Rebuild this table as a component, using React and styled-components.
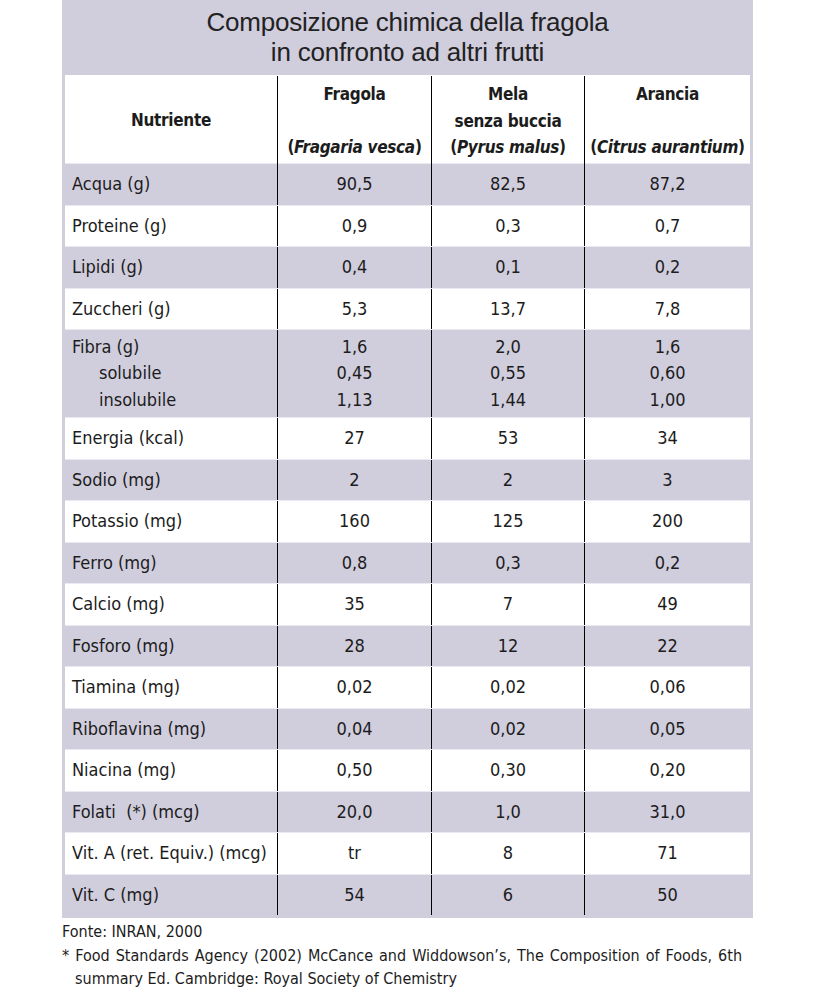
import React from 'react'
import styled, { createGlobalStyle } from 'styled-components'

const GlobalStyle = createGlobalStyle`
  body {
    margin: 0;
    background: #ffffff;
    font-family: "Liberation Sans Narrow", "DejaVu Sans Condensed", "Liberation Sans", Arial, sans-serif;
    color: #1c1c1c;
  }
`

const rows = [
  { name: 'Acqua (g)', v: ['90,5', '82,5', '87,2'] },
  { name: 'Proteine (g)', v: ['0,9', '0,3', '0,7'] },
  { name: 'Lipidi (g)', v: ['0,4', '0,1', '0,2'] },
  { name: 'Zuccheri (g)', v: ['5,3', '13,7', '7,8'] },
  {
    name: 'Fibra (g)',
    v: ['1,6', '2,0', '1,6'],
    sub: [
      { name: 'solubile', v: ['0,45', '0,55', '0,60'] },
      { name: 'insolubile', v: ['1,13', '1,44', '1,00'] },
    ],
  },
  { name: 'Energia (kcal)', v: ['27', '53', '34'] },
  { name: 'Sodio (mg)', v: ['2', '2', '3'] },
  { name: 'Potassio (mg)', v: ['160', '125', '200'] },
  { name: 'Ferro (mg)', v: ['0,8', '0,3', '0,2'] },
  { name: 'Calcio (mg)', v: ['35', '7', '49'] },
  { name: 'Fosforo (mg)', v: ['28', '12', '22'] },
  { name: 'Tiamina (mg)', v: ['0,02', '0,02', '0,06'] },
  { name: 'Riboflavina (mg)', v: ['0,04', '0,02', '0,05'] },
  { name: 'Niacina (mg)', v: ['0,50', '0,30', '0,20'] },
  { name: 'Folati\u00a0\u00a0(*) (mcg)', v: ['20,0', '1,0', '31,0'] },
  { name: 'Vit. A (ret. Equiv.) (mcg)', v: ['tr', '8', '71'] },
  { name: 'Vit. C (mg)', v: ['54', '6', '50'] },
]

const Page = styled.div`
  width: 691px;
  margin-left: 62px;
`

const Frame = styled.div`
  background: #d0cddd;
  padding: 0 3px 3px 3px;
`

const Title = styled.h1`
  margin: 0;
  padding: 7px 0 8px;
  font-family: "Liberation Sans", Arial, sans-serif;
  font-weight: 400;
  font-size: 26px;
  line-height: 30px;
  text-align: center;
  color: #222;
  letter-spacing: -0.2px;
`

const Row = styled.div`
  display: grid;
  grid-template-columns: 212px 154px 153px 166px;
  background: ${p => (p.$shaded ? '#d0cddd' : '#ffffff')};
  border-top: 1px solid ${p => (p.$first ? 'transparent' : '#ebe9f1')};
  height: ${p => p.$h}px;
`

const Cell = styled.div`
  display: flex;
  flex-direction: column;
  justify-content: center;
  align-items: ${p => (p.$left ? 'flex-start' : 'center')};
  padding-left: ${p => (p.$left ? '7px' : '0')};
  border-left: ${p => (p.$left ? 'none' : '1px solid #000')};
  font-size: 18px;
  line-height: 26.5px;
  white-space: nowrap;
`

const HeadCell = styled(Cell)`
  font-weight: 700;
  font-size: 17px;
  letter-spacing: -0.3px;
  justify-content: ${p => (p.$center ? 'center' : 'space-between')};
  align-items: center;
  padding: ${p => (p.$center ? '0' : '5px 0 3px')};
  text-align: center;
`

const Sub = styled.span`
  padding-left: ${p => (p.$indent ? '27px' : '0')};
`

const Notes = styled.div`
  padding-top: 2px;
  font-size: 16px;
  line-height: 23.5px;
  color: #1c1c1c;
`

const Note = styled.p`
  box-sizing: border-box;
  margin: 0;
  text-align: ${p => (p.$justify ? 'justify' : 'left')};
  padding-left: ${p => (p.$hang ? '13px' : '0')};
  text-indent: ${p => (p.$hang ? '-13px' : '0')};
  width: 680px;
`

export default function App() {
  return (
    <Page>
      <GlobalStyle />
      <Frame>
        <Title>
          Composizione chimica della fragola
          <br />
          in confronto ad altri frutti
        </Title>
        <Row $first $h={87}>
          <HeadCell $left $center>Nutriente</HeadCell>
          <HeadCell>
            <span>Fragola</span>
            <span>(<i>Fragaria vesca</i>)</span>
          </HeadCell>
          <HeadCell>
            <span>Mela</span>
            <span>senza buccia</span>
            <span>(<i>Pyrus malus</i>)</span>
          </HeadCell>
          <HeadCell>
            <span>Arancia</span>
            <span>(<i>Citrus aurantium</i>)</span>
          </HeadCell>
        </Row>
        {rows.map((r, i) => (
          <Row key={r.name} $shaded={i % 2 === 0} $h={r.sub ? 87 : 40.5}>
            <Cell $left>
              <Sub>{r.name}</Sub>
              {r.sub && r.sub.map(s => <Sub key={s.name} $indent>{s.name}</Sub>)}
            </Cell>
            {r.v.map((val, j) => (
              <Cell key={j}>
                <span>{val}</span>
                {r.sub && r.sub.map(s => <span key={s.name}>{s.v[j]}</span>)}
              </Cell>
            ))}
          </Row>
        ))}
      </Frame>
      <Notes>
        <Note>Fonte: INRAN, 2000</Note>
        <Note $hang $justify>
          * Food Standards Agency (2002) McCance and Widdowson’s, The Composition of Foods, 6th summary Ed. Cambridge: Royal Society of Chemistry
        </Note>
      </Notes>
    </Page>
  )
}
